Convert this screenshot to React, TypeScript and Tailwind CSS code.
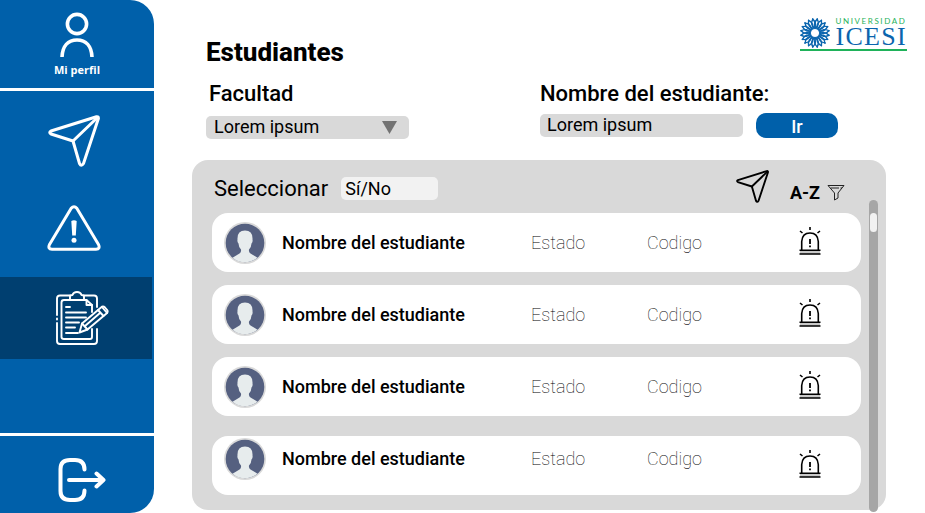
import React from "react";

function ProfileIcon() {
  return (
    <svg width="34" height="46" viewBox="0 0 34 46" fill="none" stroke="#fff" strokeWidth="3.6">
      <circle cx="17" cy="12" r="9.6" />
      <path d="M2 45C2.500 34 8 28 17 28S31.500 34 32 45" />
    </svg>
  );
}

function SendIcon({ size, stroke }: { size: number; stroke: number }) {
  return (
    <svg width={size} height={size} viewBox="0 0 52 52" fill="none" stroke="currentColor" strokeWidth={stroke} strokeLinejoin="round" strokeLinecap="round">
      <path d="M48.500 1.700 3 16Q0.500 17.500 3 19L25 26 31.500 48.500Q33.300 52 35.500 48.500L50.400 3.500Q50.500 1.300 48.500 1.700Z" />
      <path d="M49.500 2.500 25 26" />
    </svg>
  );
}

function AlertIcon() {
  return (
    <svg width="54" height="46" viewBox="0 0 54 46" fill="none" stroke="#fff" strokeLinecap="round">
      <path strokeWidth="3" strokeLinejoin="round" d="M24.200 3.300Q27 0 29.800 3.300L51.500 39.500Q53.500 44 49 44.200H5Q0.500 44 2.500 39.500Z" />
      <path fill="#fff" stroke="none" d="M24.300 16Q27 14.300 29.700 16L28.800 30.500H25.200Z" />
      <circle cx="27" cy="35.300" r="2.500" fill="#fff" stroke="none" />
    </svg>
  );
}

function ClipboardIcon() {
  return (
    <svg width="54" height="56" viewBox="0 0 54 56" fill="none" stroke="#fff" strokeWidth="1.900" strokeLinecap="round" strokeLinejoin="round">
      <path d="M15 5.500H5Q2 5.500 2 8.500V25M2 28.500V29.500M2 33V51Q2 54 5 54H39Q42 54 42 51V39M42 17V8.500Q42 5.500 39 5.500H29" />
      <path d="M15 9.500V6.500Q15 5 17.500 5Q18.500 2 22 2T26.500 5Q29 5 29 6.500V9.500" />
      <path d="M37 22V15L31.500 10H9Q6.500 10 6.500 12.500V47Q6.500 49 9 49H35Q37 49 37 47V39" />
      <path d="M31.500 10V15H37" />
      <path d="M11 17H15M11 22.500H31M11 27.500H31M11 32.500H24M11 37.500H20M11 43H23" />
      <path d="M27 33.500 46 17.500Q48 15.500 50 17.500L52 19.800Q53.500 21.700 51.500 23.500L32.500 39.500 24.500 42.500Z" />
      <path d="M27 33.500 32.500 39.500M30 36 45 23M43 20 48.500 26" />
      <path d="M47 17 52 23" />
    </svg>
  );
}

function LogoutIcon() {
  return (
    <svg width="48" height="44" viewBox="0 0 48 44" fill="none" stroke="#fff" strokeWidth="4" strokeLinecap="round" strokeLinejoin="round">
      <path d="M26.500 11.500C26.500 5 23 2 17 2H12C6 2 2.500 5 2.500 11V33C2.500 39 6 42 12 42H17C23 42 26.500 39 26.500 32.500" />
      <path d="M11 22H45M38.500 15.500 45.500 22 38.500 28.500" />
    </svg>
  );
}

function FilterIcon() {
  return (
    <svg width="18" height="17" viewBox="0 0 18 17" fill="none" stroke="#222" strokeWidth="1">
      <path d="M1 1.500H17L11 9V14L7.500 16V9Z" />
      <path d="M3.500 4H12M13.500 4H15" />
    </svg>
  );
}

function SirenIcon() {
  return (
    <svg width="22" height="28" viewBox="0 0 22 28" fill="none" stroke="#000" strokeWidth="1.600">
      <path d="M2.700 23V14.500Q3.200 6 11 6T19.300 14.500V23" />
      <path fill="#c9c9c9" stroke="none" d="M1 23H21V27H1Z" />
      <path d="M0.500 23.200H21.500M0.500 27H21.500M11 0V3M1 4 3.500 6M21 4 18.500 6" />
      <path strokeWidth="1.800" d="M11 12V17M11 18.500V20.300" />
    </svg>
  );
}

function Avatar() {
  return (
    <svg width="42" height="42" viewBox="0 0 42 42">
      <circle cx="21" cy="21" r="21" fill="#d9d9d9" />
      <circle cx="21" cy="21" r="19.300" fill="#556080" />
      <path fill="#e7eced" d="M8.500 35.700 15.500 31.500Q17.500 30.200 17 27.500Q14.500 24.500 14.500 21.500Q13 20 13.500 17.500Q13 8.500 21 8.500T28.500 17.500Q29 20 27.500 21.500Q27.500 24.500 25 27.500Q24.500 30.200 26.500 31.500L33.500 35.700Q28 40.300 21 40.300T8.500 35.700Z" />
    </svg>
  );
}

const petals = Array.from({ length: 20 }, (_, i) => i * 18);

function IcesiLogo() {
  return (
    <div className="border-b-2 border-[#1fb25a]">
      <div className="flex items-center gap-[6px]">
        <svg width="30" height="30" viewBox="0 0 30 30" fill="none" stroke="#0b65ae" strokeWidth="1.400">
          {petals.map((a) => (
            <g key={a} transform={`rotate(${a} 15 15)`}>
              <path d="M15 10.500C18.500 9 19.500 4.500 16.800 0.500" />
              <path d="M15 10.500C11.500 9 10.500 4.500 13.200 0.500" />
            </g>
          ))}
        </svg>
        <div className="flex flex-col">
          <span className="pt-px font-['Lato',sans-serif] text-[8px] leading-[8px] tracking-[0.200em] text-[#1fb25a]">UNIVERSIDAD</span>
          <span className="font-['Liberation_Serif',serif] text-[26px] leading-[24px] tracking-wider text-[#0b65ae]">ICESI</span>
        </div>
      </div>
    </div>
  );
}

const students = [1, 2, 3, 4];

function StudentRow({ last }: { last: boolean }) {
  return (
    <li className={`flex h-[59px] items-center rounded-[16px] bg-white pl-3 ${last ? "mt-5" : "mt-[13px] first:mt-0"}`}>
      <div className={`flex flex-1 items-center ${last ? "pb-[14px]" : ""}`}>
        <Avatar />
        <span className="ml-4 w-[249px] text-[18px] font-medium">Nombre del estudiante</span>
        <span className="w-[116px] text-[18px] font-thin">Estado</span>
        <span className="text-[18px] font-thin">Codigo</span>
      </div>
      <button aria-label="Alertar" className={`mr-10 ${last ? "pb-1" : "pb-1"}`}>
        <SirenIcon />
      </button>
    </li>
  );
}

export default function App() {
  return (
    <div className="flex min-h-screen bg-white font-['Roboto',sans-serif] text-black">
      <aside className="flex w-[154px] shrink-0 flex-col rounded-r-[24px] bg-[#0060aa] text-white">
        <a href="#perfil" className="flex h-[91px] flex-col items-center border-b-[3px] border-white pt-3">
          <ProfileIcon />
          <span className="mt-1 font-['Open_Sans',sans-serif] text-[11px] leading-4 font-bold">Mi perfil</span>
        </a>
        <nav className="flex flex-col">
          <a href="#enviar" aria-label="Enviar" className="flex h-[100px] items-center justify-center pr-[6px]">
            <SendIcon size={52} stroke={3} />
          </a>
          <a href="#alertas" aria-label="Alertas" className="flex h-[86px] justify-center pt-[14px] pr-[6px]">
            <AlertIcon />
          </a>
          <a href="#registro" aria-label="Registro" className="mr-[2px] flex h-[82px] items-center justify-center bg-[#003f70] pl-[11px]">
            <ClipboardIcon />
          </a>
        </nav>
        <a href="#salir" aria-label="Salir" className="mt-auto flex h-20 items-center justify-center border-t-[3px] border-white pt-[10px] pl-[10px]">
          <LogoutIcon />
        </a>
      </aside>

      <main className="flex-1 pl-[38px]">
        <header className="flex h-20 items-start justify-between pt-4 pr-[18px] pl-[14px]">
          <h1 className="pt-5 text-[26px] leading-8 font-extrabold">Estudiantes</h1>
          <IcesiLogo />
        </header>

        <div className="pr-[39px]">
          <form className="grid h-20 grid-cols-2 pr-3 pl-[14px]" onSubmit={(e) => e.preventDefault()}>
            <div>
              <label htmlFor="facultad" className="block pl-[3px] text-[22px] leading-7 font-medium">Facultad</label>
              <div className="relative mt-2 w-[203px]">
                <select id="facultad" className="h-[23px] w-full appearance-none rounded-[5px] bg-[#d9d9d9] px-2 pb-[2px] text-[18px] leading-[21px]">
                  <option>Lorem ipsum</option>
                </select>
                <svg className="pointer-events-none absolute top-[5px] right-3" width="15" height="13" viewBox="0 0 15 13">
                  <path d="M0 0H15L7.500 13Z" fill="#737373" />
                </svg>
              </div>
            </div>
            <div>
              <label htmlFor="nombre" className="block text-[22px] leading-7 font-medium whitespace-nowrap">Nombre del estudiante:</label>
              <div className="mt-[5px] flex items-center gap-[13px]">
                <input id="nombre" defaultValue="Lorem ipsum" className="h-[23px] w-[203px] rounded-[5px] bg-[#d9d9d9] px-[7px] pb-[2px] text-[18px]" />
                <button type="submit" className="h-[25px] w-[82px] rounded-[10px] bg-[#0060aa] pt-[2px] text-[18px] leading-[23px] font-medium text-white">Ir</button>
              </div>
            </div>
          </form>

          <section className="flex h-[350px] rounded-[16px] bg-[#d9d9d9] pr-2 pl-5">
            <div className="flex-1">
              <div className="flex h-[53px] items-center justify-between pr-4 pl-[2px]">
                <div className="flex items-center gap-[13px] pt-[3px]">
                  <label htmlFor="seleccionar" className="text-[22px]">Seleccionar</label>
                  <input id="seleccionar" defaultValue="Sí/No" className="h-[23px] w-[97px] rounded-[5px] bg-[#f2f2f2] px-1 text-[18px]" />
                </div>
                <div className="flex items-center">
                  <button aria-label="Enviar a seleccionados">
                    <SendIcon size={33} stroke={3} />
                  </button>
                  <button className="ml-[21px] flex items-center gap-[7px] pt-3 text-[18px] leading-6 font-bold">
                    A-Z <FilterIcon />
                  </button>
                </div>
              </div>
              <ul>
                {students.map((n) => (
                  <StudentRow key={n} last={n === students.length} />
                ))}
              </ul>
            </div>
            <div className="mt-10 -mb-[2px] ml-2 w-[9px] rounded-full bg-[#a6a6a6] px-px pt-[13px]">
              <div className="h-[19px] rounded-full bg-[#f2f2f2]" />
            </div>
          </section>
        </div>
      </main>
    </div>
  );
}
